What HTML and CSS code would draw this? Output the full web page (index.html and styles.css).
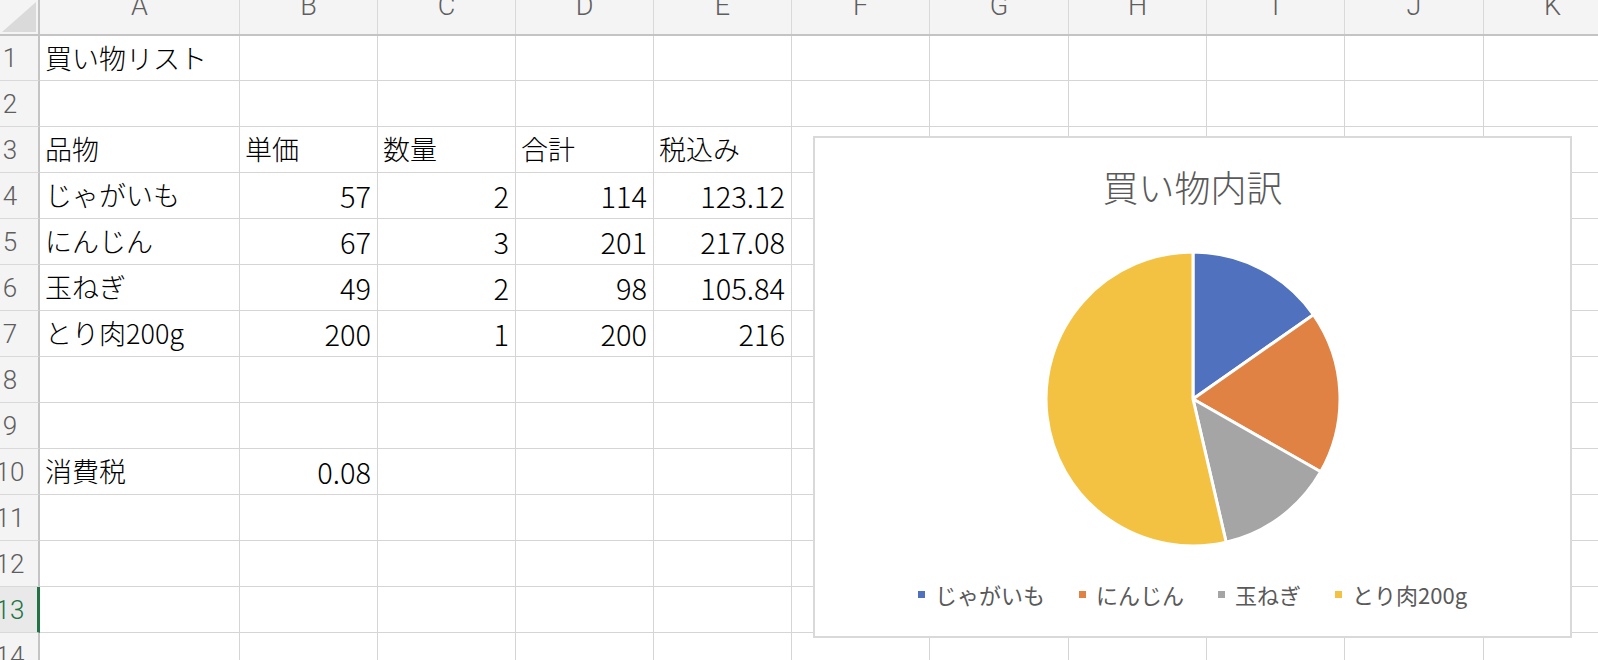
FILE: index.html
```html
<!DOCTYPE html>
<html lang="ja">
<head>
<meta charset="utf-8">
<title>買い物リスト</title>
<link rel="stylesheet" href="styles.css">
</head>
<body>
<div class="sheet">
  <div class="row hdr">
    <div class="corner"><span class="tri"></span></div>
    <div class="ch"><span>A</span></div>
    <div class="ch"><span>B</span></div>
    <div class="ch"><span>C</span></div>
    <div class="ch"><span>D</span></div>
    <div class="ch"><span>E</span></div>
    <div class="ch"><span>F</span></div>
    <div class="ch"><span>G</span></div>
    <div class="ch"><span>H</span></div>
    <div class="ch"><span>I</span></div>
    <div class="ch"><span>J</span></div>
    <div class="ch"><span>K</span></div>
  </div>
  <div class="row first">
    <div class="rh"><span>1</span></div>
    <div class="c">買い物リスト</div><div class="c"></div><div class="c"></div><div class="c"></div><div class="c"></div><div class="c"></div><div class="c"></div><div class="c"></div><div class="c"></div><div class="c"></div><div class="c"></div>
  </div>
  <div class="row">
    <div class="rh"><span>2</span></div>
    <div class="c"></div><div class="c"></div><div class="c"></div><div class="c"></div><div class="c"></div><div class="c"></div><div class="c"></div><div class="c"></div><div class="c"></div><div class="c"></div><div class="c"></div>
  </div>
  <div class="row">
    <div class="rh"><span>3</span></div>
    <div class="c">品物</div><div class="c">単価</div><div class="c">数量</div><div class="c">合計</div><div class="c">税込み</div><div class="c"></div><div class="c"></div><div class="c"></div><div class="c"></div><div class="c"></div><div class="c"></div>
  </div>
  <div class="row">
    <div class="rh"><span>4</span></div>
    <div class="c">じゃがいも</div><div class="c num">57</div><div class="c num">2</div><div class="c num">114</div><div class="c num">123.12</div><div class="c"></div><div class="c"></div><div class="c"></div><div class="c"></div><div class="c"></div><div class="c"></div>
  </div>
  <div class="row">
    <div class="rh"><span>5</span></div>
    <div class="c">にんじん</div><div class="c num">67</div><div class="c num">3</div><div class="c num">201</div><div class="c num">217.08</div><div class="c"></div><div class="c"></div><div class="c"></div><div class="c"></div><div class="c"></div><div class="c"></div>
  </div>
  <div class="row">
    <div class="rh"><span>6</span></div>
    <div class="c">玉ねぎ</div><div class="c num">49</div><div class="c num">2</div><div class="c num">98</div><div class="c num">105.84</div><div class="c"></div><div class="c"></div><div class="c"></div><div class="c"></div><div class="c"></div><div class="c"></div>
  </div>
  <div class="row">
    <div class="rh"><span>7</span></div>
    <div class="c">とり肉200g</div><div class="c num">200</div><div class="c num">1</div><div class="c num">200</div><div class="c num">216</div><div class="c"></div><div class="c"></div><div class="c"></div><div class="c"></div><div class="c"></div><div class="c"></div>
  </div>
  <div class="row">
    <div class="rh"><span>8</span></div>
    <div class="c"></div><div class="c"></div><div class="c"></div><div class="c"></div><div class="c"></div><div class="c"></div><div class="c"></div><div class="c"></div><div class="c"></div><div class="c"></div><div class="c"></div>
  </div>
  <div class="row">
    <div class="rh"><span>9</span></div>
    <div class="c"></div><div class="c"></div><div class="c"></div><div class="c"></div><div class="c"></div><div class="c"></div><div class="c"></div><div class="c"></div><div class="c"></div><div class="c"></div><div class="c"></div>
  </div>
  <div class="row">
    <div class="rh"><span>10</span></div>
    <div class="c">消費税</div><div class="c num">0.08</div><div class="c"></div><div class="c"></div><div class="c"></div><div class="c"></div><div class="c"></div><div class="c"></div><div class="c"></div><div class="c"></div><div class="c"></div>
  </div>
  <div class="row">
    <div class="rh"><span>11</span></div>
    <div class="c"></div><div class="c"></div><div class="c"></div><div class="c"></div><div class="c"></div><div class="c"></div><div class="c"></div><div class="c"></div><div class="c"></div><div class="c"></div><div class="c"></div>
  </div>
  <div class="row">
    <div class="rh"><span>12</span></div>
    <div class="c"></div><div class="c"></div><div class="c"></div><div class="c"></div><div class="c"></div><div class="c"></div><div class="c"></div><div class="c"></div><div class="c"></div><div class="c"></div><div class="c"></div>
  </div>
  <div class="row">
    <div class="rh active"><span>13</span></div>
    <div class="c"></div><div class="c"></div><div class="c"></div><div class="c"></div><div class="c"></div><div class="c"></div><div class="c"></div><div class="c"></div><div class="c"></div><div class="c"></div><div class="c"></div>
  </div>
  <div class="row">
    <div class="rh"><span>14</span></div>
    <div class="c"></div><div class="c"></div><div class="c"></div><div class="c"></div><div class="c"></div><div class="c"></div><div class="c"></div><div class="c"></div><div class="c"></div><div class="c"></div><div class="c"></div>
  </div>

  <div class="chart">
    <div class="chart-title">買い物内訳</div>
    <svg class="pie" width="300" height="300" viewBox="0 0 300 300">
      <path d="M150,150 L150,3 A147,147 0 0 1 270.42,65.70 Z" fill="#4f71be"/>
      <path d="M150,150 L270.42,65.70 A147,147 0 0 1 277.71,222.78 Z" fill="#df8244"/>
      <path d="M150,150 L277.71,222.78 A147,147 0 0 1 183.15,293.22 Z" fill="#a5a5a5"/>
      <path d="M150,150 L183.15,293.22 A147,147 0 1 1 150,3 Z" fill="#f4c242"/>
    </svg>
    <div class="legend">
      <div class="lg"><span class="sw sw-blue"></span>じゃがいも</div>
      <div class="lg"><span class="sw sw-orange"></span>にんじん</div>
      <div class="lg"><span class="sw sw-gray"></span>玉ねぎ</div>
      <div class="lg"><span class="sw sw-yellow"></span>とり肉200g</div>
    </div>
  </div>
</div>
</body>
</html>
```
FILE: styles.css
```css
* { box-sizing: border-box; }

html, body {
  margin: 0;
  padding: 0;
  background: #ffffff;
  overflow: hidden;
}

body {
  width: 1598px;
  height: 660px;
  font-family: "Noto Sans CJK JP", "Noto Sans", sans-serif;
  color: #000;
}

.sheet {
  position: relative;
  width: 1598px;
  height: 660px;
  overflow: hidden;
}

.row {
  display: grid;
  grid-template-columns: 40px 200px 138px 138px 138px 138px 138px 139px 138px 138px 139px 138px;
  height: 46px;
}

.row.first { height: 45px; }

.row.hdr {
  height: 36px;
  background: #f4f4f4;
  border-bottom: 2px solid #c4c4c4;
}

.corner {
  border-right: 2px solid #c4c4c4;
  padding: 0 2px 2px 0;
  display: flex;
  align-items: flex-end;
  justify-content: flex-end;
}

.tri {
  display: block;
  width: 34px;
  height: 30px;
  background: #dadada;
  clip-path: polygon(100% 0, 100% 100%, 0 100%);
}

.ch {
  border-right: 1px solid #d9d9d9;
  display: flex;
  justify-content: center;
  align-items: flex-start;
  overflow: hidden;
  font-family: "Roboto", "Noto Sans", sans-serif;
  font-weight: 300;
  font-size: 27px;
  color: #5e5e5e;
}

.ch span {
  line-height: 20px;
  margin-top: -4px;
}

.rh {
  background: #f4f4f4;
  border-right: 2px solid #c4c4c4;
  border-bottom: 1px solid #d9d9d9;
  display: flex;
  align-items: center;
  justify-content: center;
  padding-right: 18px;
  font-family: "Roboto", "Noto Sans", sans-serif;
  font-weight: 300;
  font-size: 26px;
  color: #5e5e5e;
  white-space: nowrap;
}

.rh.active {
  background: #e9e9e9;
  color: #217346;
  border-right: 3px solid #217346;
  padding-right: 17px;
}

.c {
  border-right: 1px solid #d5d5d5;
  border-bottom: 1px solid #d5d5d5;
  display: flex;
  align-items: center;
  padding: 0 6px 2px 5px;
  font-size: 27px;
  font-weight: 300;
  white-space: nowrap;
  overflow: hidden;
}

.c.num {
  justify-content: flex-end;
  font-size: 29px;
}

.chart {
  position: absolute;
  left: 813px;
  top: 136px;
  width: 759px;
  height: 502px;
  background: #fff;
  border: 2px solid #d9d9d9;
  display: flex;
  flex-direction: column;
  align-items: center;
}

.chart-title {
  margin-top: 28px;
  font-size: 36px;
  line-height: 40px;
  font-weight: 300;
  color: #595959;
}

.pie {
  display: block;
  margin-top: 43px;
}

.pie path {
  stroke: #ffffff;
  stroke-width: 3;
  stroke-linejoin: round;
}

.legend {
  margin-top: 30px;
  display: flex;
  gap: 34px;
  height: 30px;
  line-height: 30px;
  font-size: 22px;
  color: #595959;
}

.lg {
  display: flex;
  align-items: center;
  white-space: nowrap;
}

.sw {
  display: block;
  width: 7px;
  height: 7px;
  margin-right: 10px;
}

.sw-blue { background: #4f71be; }
.sw-orange { background: #df8244; }
.sw-gray { background: #a5a5a5; }
.sw-yellow { background: #f4c242; }
```
